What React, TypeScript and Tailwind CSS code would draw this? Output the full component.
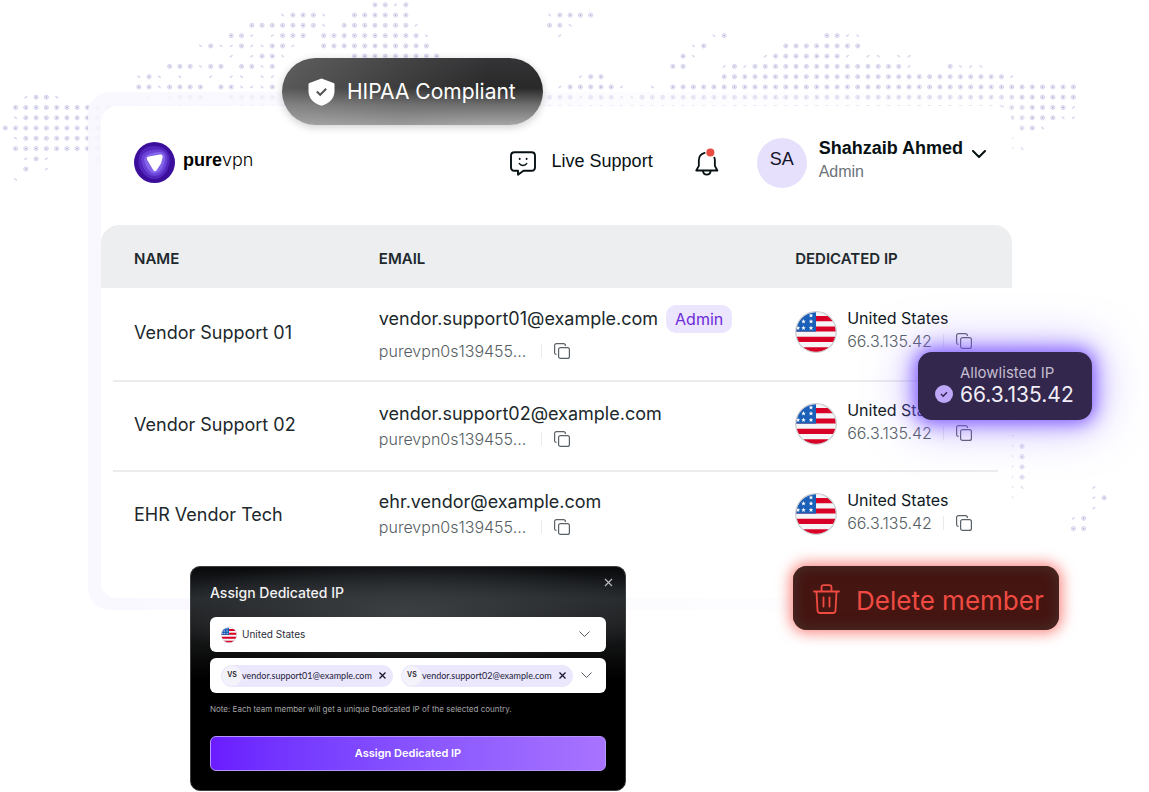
import { ReactNode } from 'react';

interface Member {
  name: string;
  email: string;
  account: string;
  admin?: boolean;
  height: string;
}

const members: Member[] = [
  { name: 'Vendor Support 01', email: 'vendor.support01@example.com', account: 'purevpn0s139455...', admin: true, height: 'h-[94px]' },
  { name: 'Vendor Support 02', email: 'vendor.support02@example.com', account: 'purevpn0s139455...', height: 'h-[90px]' },
  { name: 'EHR Vendor Tech', email: 'ehr.vendor@example.com', account: 'purevpn0s139455...', height: 'h-[84px]' },
];

// world map dots: [row, first column, last column]
const dots: number[][] = [
  [0, 36, 37], [0, 39, 39], [1, 28, 30], [1, 34, 39], [1, 54, 57],
  [2, 24, 30], [2, 33, 39], [2, 53, 54],
  [3, 22, 23], [3, 27, 29], [3, 31, 40], [3, 70, 70], [3, 80, 81],
  [4, 20, 20], [4, 23, 23], [4, 26, 27], [4, 31, 41], [4, 68, 68], [4, 76, 83],
  [5, 25, 26], [5, 34, 42], [5, 66, 66], [5, 75, 81],
  [6, 16, 18], [6, 20, 21], [6, 23, 24], [6, 26, 26], [6, 65, 66], [6, 71, 71], [6, 73, 87], [6, 92, 92],
  [7, 14, 14], [7, 57, 58], [7, 70, 97],
  [8, 13, 14], [8, 16, 19], [8, 21, 22], [8, 26, 26], [8, 55, 59], [8, 65, 104],
  [9, 3, 4], [9, 17, 19], [9, 22, 26], [9, 53, 55], [9, 57, 59], [9, 62, 104],
  [10, 1, 103], [11, 2, 9], [11, 98, 102], [12, 0, 9], [12, 99, 100], [13, 2, 9], [14, 1, 9],
  [15, 3, 3], [15, 9, 9], [16, 2, 2],
  [43, 99, 99], [44, 99, 99], [45, 99, 99], [46, 99, 99], [48, 107, 107], [50, 105, 105], [51, 104, 105],
];

// smaller dots along the coast lines: [row, ...columns]
const coast: number[][] = [
  [0, 38], [1, 27, 31, 53], [2, 31, 40, 55], [3, 24, 26, 41, 54, 69, 82, 83],
  [4, 19, 21, 22, 24, 25, 28, 67], [5, 22, 24, 27, 67, 74, 82, 84, 85, 87, 88],
  [6, 19, 25, 70, 72, 88, 93, 94, 95], [7, 13, 15, 17, 20, 22, 23, 25, 26, 56, 98],
  [8, 15, 23, 24, 25, 54, 60, 63], [9, 2, 5, 14, 16, 56, 60, 61], [10, 104],
  [11, 1, 103, 104], [12, 101], [13, 1, 98], [14, 98, 99], [15, 2, 4], [16, 4], [17, 1],
  [42, 98], [43, 98], [44, 98], [45, 98], [46, 98], [47, 98, 99, 106], [48, 98, 106], [49, 106], [50, 104],
];

const pitch = 10.27;

const DottedMap = () => (
  <svg aria-hidden="true" width="1149" height="600" className="absolute left-0 top-0">
    {dots.flatMap(([row, from, to]) =>
      Array.from({ length: to - from + 1 }, (_, i) => {
        const cx = 5.3 + (from + i) * pitch;
        const cy = 4.8 + row * pitch;
        return (
          <g key={`${row}-${from + i}`}>
            <circle cx={cx} cy={cy} r="2.1" fill="#f3f2fc" stroke="#d3d2ec" strokeWidth="0.9" />
            <circle cx={cx} cy={cy} r="0.9" fill="#b0afd0" />
          </g>
        );
      })
    )}
    {coast.flatMap(([row, ...columns]) =>
      columns.map((col) => (
        <ellipse
          key={`${row}-${col}`}
          cx={5.3 + col * pitch}
          cy={4.8 + row * pitch}
          rx="1.9"
          ry="0.9"
          transform={`rotate(${col % 2 ? 40 : -35} ${5.3 + col * pitch} ${4.8 + row * pitch})`}
          fill="#dad9ee"
        />
      ))
    )}
  </svg>
);

const star = 'M0-2.4 .6-.8 2.3-.7 1 .3 1.4 2 0 1 -1.4 2 -1 .3 -2.3-.7 -.6-.8Z';

const Flag = ({ id, className }: { id: string; className: string }) => (
  <svg viewBox="0 0 42 42" className={className} aria-hidden="true">
    <clipPath id={id}>
      <circle cx="21" cy="21" r="20" />
    </clipPath>
    <g clipPath={`url(#${id})`}>
      <rect width="42" height="42" fill="#f5f5f7" />
      <path d="M0 5h42v5.200H0zM0 15.400h42v5.200H0zM0 25.800h42v5.200H0zM0 36.200h42v6H0z" fill="#d80027" />
      <rect width="21" height="20.600" fill="#1a5fb8" />
      <path d={star} fill="#fff" transform="translate(16 4.500)" />
      <path d={star} fill="#fff" transform="translate(8.500 10.500)" />
      <path d={star} fill="#fff" transform="translate(16 10.500)" />
      <path d={star} fill="#fff" transform="translate(3 17)" />
      <path d={star} fill="#fff" transform="translate(8.500 17)" />
      <path d={star} fill="#fff" transform="translate(16 17)" />
    </g>
    <circle cx="21" cy="21" r="20.300" fill="none" stroke="#c9ccd1" strokeWidth="1.200" />
  </svg>
);

const Logo = () => (
  <a href="#" className="flex items-center gap-2 text-black">
    <svg width="41" height="41" viewBox="0 0 41 41" aria-hidden="true">
      <circle cx="20.500" cy="20.500" r="20.500" fill="#3b0f9b" />
      <path d="M20.500 4C32 4 37 12 35.500 21S28 37 20.500 37 5 30 4.500 20 10 4 20.500 4Z" fill="#5326bd" />
      <path d="M22 7.500C31 7 34.500 12 33 20S27.500 34 20.500 34 9 27 7.500 19.500 12 8 22 7.500Z" fill="#6a42d6" />
      <path d="M24 10C30 9.500 32 13 30.500 19.500S26 31 21 31.500 12 25 10.500 19.500 14 11 24 10Z" fill="#8465ea" />
      <path d="M15 14.500 26 12.500C28 12.300 29 13.500 28.600 15.500L27 21.500 22.600 28.200C21.600 29.700 20 29.500 19.200 28L13.300 18C12.300 16 13 14.800 15 14.500Z" fill="#fff" />
    </svg>
    <span className="pb-1 text-[18px] leading-6">
      <span className="font-bold">pure</span>
      <span className="font-[Inter,sans-serif] font-light">vpn</span>
    </span>
  </a>
);

const CopyButton = () => (
  <button type="button" aria-label="Copy" className="text-[#596066]">
    <svg width="16" height="16" viewBox="0 0 16 16" fill="none" stroke="currentColor" strokeWidth="1.200" aria-hidden="true">
      <rect x="4.600" y="4.600" width="10.800" height="10.800" rx="2" />
      <path d="M2.600 11.400C1.300 11.400.6 10.700.6 9.400V2.600C.6 1.300 1.300.6 2.600.6h6.800c1.300 0 2 .7 2 2v.4" />
    </svg>
  </button>
);

const Chevron = ({ className }: { className: string }) => (
  <svg viewBox="0 0 14 8" fill="none" stroke="currentColor" className={className} aria-hidden="true">
    <path d="M1 1l6 6 6-6" strokeLinecap="round" strokeLinejoin="round" />
  </svg>
);

const Header = () => (
  <header className="flex h-[119px] items-start justify-between pl-[33px] pr-[26px] pt-8">
    <div className="flex h-12 items-center">
      <Logo />
    </div>
    <div className="flex h-[50px] items-center">
      <button type="button" className="flex items-center gap-4 text-lg text-[#071113]">
        <svg width="26" height="25" viewBox="0 0 26 25" fill="none" stroke="currentColor" strokeWidth="1.900" strokeLinecap="round" strokeLinejoin="round" aria-hidden="true">
          <path d="M4.500 1.200h17c2.200 0 3.500 1.300 3.500 3.500v11.600c0 2.200-1.300 3.500-3.500 3.500h-8L8 23.800v-4H4.500C2.300 19.800 1 18.500 1 16.300V4.700c0-2.200 1.300-3.500 3.500-3.500Z" />
          <path d="M9.300 12.500c1.300 2.500 6 2.500 7.400 0" strokeWidth="1.500" />
          <path d="M9.700 7.800v.3M16.600 7.800v.3" />
        </svg>
        <span className="pb-1">Live Support</span>
      </button>
      <button type="button" aria-label="Notifications" className="ml-[42px] text-[#071113]">
        <svg width="24" height="29" viewBox="0 0 25 30" fill="none" stroke="currentColor" strokeWidth="1.900" strokeLinecap="round" strokeLinejoin="round" className="mb-[2px]" aria-hidden="true">
          <path d="M10 5C6 6 4 9 4 13v5.500L1.300 23.300h22L20.700 18.500V13c0-1-.1-2-.5-3" />
          <path d="M8.300 23.800c.6 5.200 7.400 5.200 8 0" />
          <circle cx="16" cy="4.500" r="4.200" fill="#e84b3f" stroke="none" />
        </svg>
      </button>
      <span className="ml-[38px] flex size-[50px] items-center justify-center rounded-full bg-[#e6e0fc] pb-2 text-[18px] text-[#15142b]">SA</span>
      <button type="button" className="ml-3 flex items-center gap-[9px] text-left">
        <span className="flex flex-col pb-[6px]">
          <span className="text-[18px] font-bold leading-6 text-[#071113]">Shahzaib Ahmed</span>
          <span className="text-base leading-6 text-[#6b7378]">Admin</span>
        </span>
        <Chevron className="mb-[18px] w-[14px] stroke-2 text-[#071113]" />
      </button>
    </div>
  </header>
);

const HeadCell = ({ children, className }: { children: ReactNode; className: string }) => (
  <th scope="col" className={`h-[63px] bg-[#eceef0] pt-[5px] text-left text-[15px] font-semibold text-[#20282c] ${className}`}>
    {children}
  </th>
);

const MemberTable = () => (
  <table className="w-full table-fixed border-separate border-spacing-0 font-[Inter,sans-serif]">
    <thead>
      <tr>
        <HeadCell className="w-[30.5%] rounded-tl-[18px] pl-[33px]">NAME</HeadCell>
        <HeadCell className="w-[45.7%]">EMAIL</HeadCell>
        <HeadCell className="rounded-tr-[18px]">DEDICATED IP</HeadCell>
      </tr>
    </thead>
    <tbody>
      {members.map((m, i) => {
        const last = i === members.length - 1;
        const line = last ? '' : 'border-b-2 border-[#ebecee]';
        const lift = last ? '' : 'pb-1';
        return (
          <tr key={m.email}>
            <td className="p-0 pl-3">
              <div className={`flex items-center pl-[21px] text-[18px] text-[#20282c] ${lift} ${m.height} ${line}`}>{m.name}</div>
            </td>
            <td className="p-0">
              <div className={`flex flex-col justify-center pb-1 ${m.admin ? 'gap-[10px]' : 'gap-1'} ${m.height} ${line}`}>
                <div className="flex items-center gap-2 text-[18px] leading-[26px] text-[#20282c]">
                  {m.email}
                  {m.admin && <span className="rounded-[10px] bg-[#ebe5fe] px-[9px] text-base leading-7 text-[#6b2bd9]">Admin</span>}
                </div>
                <div className="flex items-center text-base font-light leading-5 text-[#565e63]">
                  <span className="w-[163px] border-r border-[#e8eaec] leading-[14px]">{m.account}</span>
                  <span className="flex pl-3">
                    <CopyButton />
                  </span>
                </div>
              </div>
            </td>
            <td className="p-0 pr-[14px]">
              <div className={`flex items-center gap-[10px] ${lift} ${m.height} ${line}`}>
                <Flag id={`flag-${i}`} className="size-[42px] shrink-0" />
                <div className="flex flex-col pb-[7px]">
                  <span className="text-base leading-6 text-[#101a1e]">United States</span>
                  <div className="flex h-[22px] items-center text-base font-light text-[#565e63]">
                    <span className="w-[97px] border-r border-[#e8eaec] leading-[14px]">66.3.135.42</span>
                    <span className="flex pl-3">
                      <CopyButton />
                    </span>
                  </div>
                </div>
              </div>
            </td>
          </tr>
        );
      })}
    </tbody>
  </table>
);

const Chip = ({ email }: { email: string }) => (
  <span className="flex h-[22px] shrink-0 items-center rounded-full bg-[#ebe7fd] pl-px pr-1">
    <span className="flex size-5 items-center justify-center rounded-full bg-[#f4f3fb] text-[7px] font-semibold text-[#222]">VS</span>
    <span className="font-[Lato,sans-serif] text-[9px] text-[#1d1b3a]">{email}</span>
    <button type="button" aria-label={`Remove ${email}`} className="ml-1 p-[3px] text-[#15132b]">
      <svg width="7" height="7" viewBox="0 0 7 7" stroke="currentColor" strokeWidth="1.200" aria-hidden="true">
        <path d="M.5.500l6 6M6.500.500l-6 6" />
      </svg>
    </button>
  </span>
);

const AssignDialog = () => (
  <section
    aria-label="Assign Dedicated IP"
    className="relative w-[436px] rounded-[10px] border border-[#3c4043] bg-black bg-[radial-gradient(ellipse_60%_24%_at_50%_20%,#3d4043_0%,transparent_100%),linear-gradient(to_bottom,#07090b_0%,#26292c_14%,#1a1b1c_28%,#000_50%)] px-[19px] pb-[19px] pt-[14px] font-[Inter,sans-serif]"
  >
    <h2 className="text-[14px] font-medium leading-6 text-[#f2f2f3]">Assign Dedicated IP</h2>
    <button type="button" aria-label="Close" className="absolute right-3 top-[11px] text-[#b9bbbd]">
      <svg width="9" height="9" viewBox="0 0 9 9" stroke="currentColor" strokeWidth="1.200" aria-hidden="true">
        <path d="M1 1l7 7M8 1L1 8" />
      </svg>
    </button>
    <div className="mt-3 flex h-[35px] items-center rounded-md bg-white pl-[11px] pr-4 text-[#2b2d3a]">
      <Flag id="flag-select" className="size-4" />
      <select aria-label="Country" className="ml-[5px] flex-1 appearance-none bg-transparent text-[10px]">
        <option>United States</option>
      </select>
      <Chevron className="w-[11px]" />
    </div>
    <div className="mt-[6px] flex h-[35px] items-center gap-2 rounded-md bg-white pl-[11px] pr-4 text-[#2b2d3a]">
      <Chip email="vendor.support01@example.com" />
      <Chip email="vendor.support02@example.com" />
      <button type="button" aria-label="Show members" className="ml-auto">
        <Chevron className="w-[11px]" />
      </button>
    </div>
    <p className="mt-2 text-[8px] leading-4 text-[#a5a6a8]">Note: Each team member will get a unique Dedicated IP of the selected country.</p>
    <button type="button" className="mt-[19px] h-[35px] w-full rounded-md border border-[#b795ff] bg-linear-to-r from-[#6a1bff] to-[#a873ff] text-[11px] font-semibold text-white">
      Assign Dedicated IP
    </button>
  </section>
);

const App = () => (
  <main className="relative min-h-screen overflow-hidden bg-white font-['Liberation_Sans',Arial,sans-serif]">
    <DottedMap />
    <div className="relative pl-[88px] pr-[90px] pt-[92px]">
      <div className="mr-[34px] rounded-[22px] bg-linear-to-r from-[#f8f7ff]/90 to-[#ffffff]/20 px-[13px] pb-3 pt-[14px]">
        <div className="rounded-2xl bg-white pb-[42px]">
          <Header />
          <MemberTable />
        </div>
      </div>

      <div className="-mt-11 flex items-start justify-between pl-[102px]">
        <AssignDialog />
        <button
          type="button"
          className="relative flex h-[64px] w-[266px] items-center gap-4 whitespace-nowrap rounded-[14px] bg-[#451512] pl-5 pt-1 text-[26px] text-[#f04b42] shadow-[0_0_14px_3px_rgba(245,85,75,0.7),inset_0_0_12px_3px_#462a24] font-[Inter,sans-serif]"
        >
          <svg width="27" height="30" viewBox="0 0 27 30" fill="none" stroke="currentColor" strokeWidth="1.800" strokeLinecap="round" strokeLinejoin="round" className="mb-[2px] shrink-0" aria-hidden="true">
            <path d="M1 7.500h25M8.500 7V3.500C8.500 2 9.300 1.200 10.800 1.200h5.400c1.500 0 2.300.8 2.300 2.300V7M3.500 8l1 18.500c.1 1.600 1 2.500 2.600 2.500h12.800c1.600 0 2.500-.9 2.600-2.500l1-18.500M10.500 13.500v9M16.500 13.500v9" />
          </svg>
          Delete member
        </button>
      </div>
    </div>

    <div className="absolute left-[282px] top-[58px] flex h-[67px] w-[261px] items-center gap-3 rounded-full bg-[linear-gradient(to_right,rgba(160,160,160,0.4)_0%,rgba(120,120,120,0.25)_45%,transparent_80%),linear-gradient(to_bottom,#343436_0%,#29292a_45%,#6f6f6f_70%,#a6a6a6_100%)] pl-[26px] text-white shadow-[0_2px_8px_rgba(0,0,0,0.2)]">
      <svg width="27" height="28" viewBox="0 0 27 28" aria-hidden="true">
        <path d="M13.500.500 25.500 5c.8.300 1 .7 1 1.500V13c0 7-5 12.500-13 14.700C5.500 25.500.5 20 .5 13V6.500C.5 5.700.7 5.300 1.500 5Z" fill="#fff" />
        <path d="M8.800 13.500l3.400 3.300 6-6" fill="none" stroke="#555" strokeWidth="2" />
      </svg>
      <span className="font-[Inter,sans-serif] text-[21px]">HIPAA Compliant</span>
    </div>

    <div className="absolute right-[57px] top-[352px] flex h-[68px] w-[174px] items-end gap-[7px] rounded-[14px] bg-[#33274d] pb-[13px] pl-[17px] font-[Inter,sans-serif] shadow-[0_0_18px_3px_rgba(110,70,255,0.85),0_0_44px_8px_rgba(150,120,255,0.5)]">
      <svg width="18" height="18" viewBox="0 0 18 18" className="mb-1" aria-hidden="true">
        <circle cx="9" cy="9" r="9" fill="#bfa8fb" />
        <path d="M6 9l2.200 2.200L12 7.300" fill="none" stroke="#33274d" strokeWidth="1.500" />
      </svg>
      <div className="flex flex-col">
        <span className="text-[15px] leading-5 text-[#c3bdd0]">Allowlisted IP</span>
        <span className="text-[21px] leading-6 text-[#f1eef7]">66.3.135.42</span>
      </div>
    </div>
  </main>
);

export default App;
